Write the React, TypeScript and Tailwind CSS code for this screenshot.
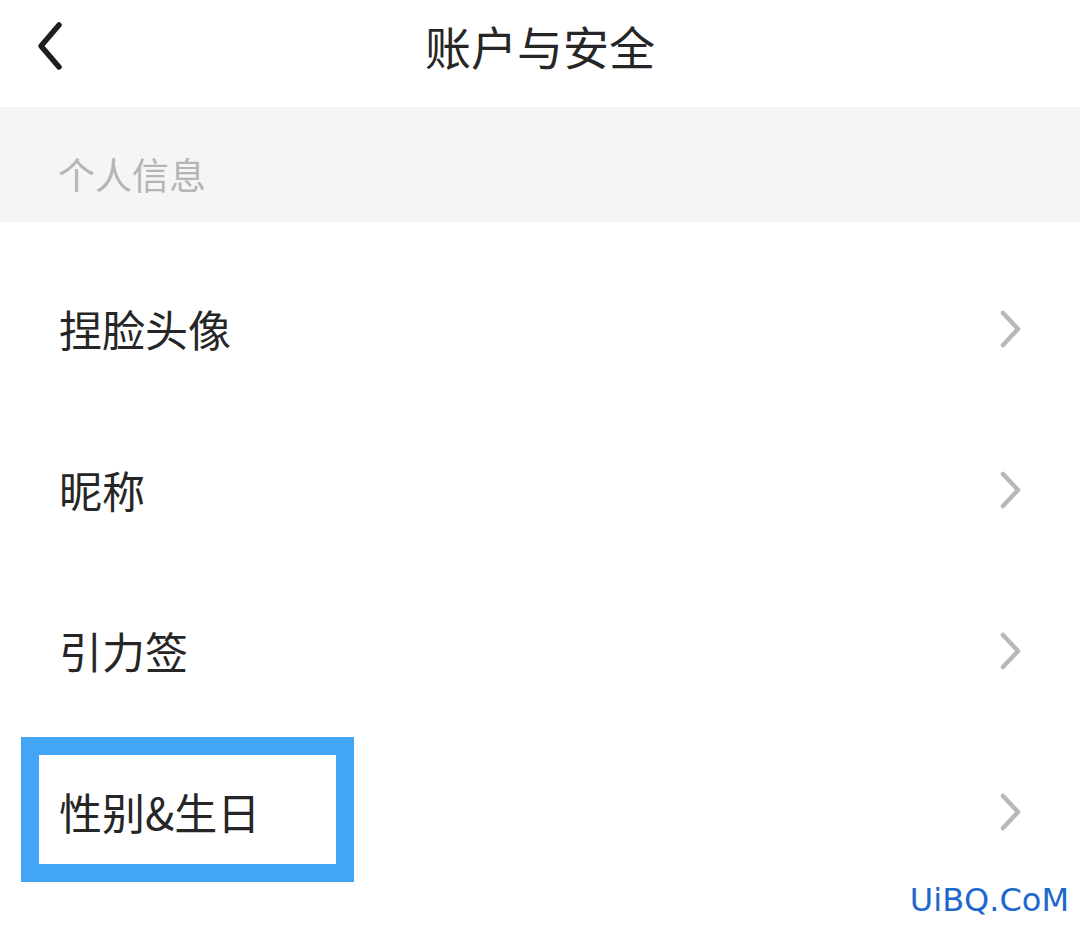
import React from 'react';

const rows = ['捏脸头像', '昵称', '引力签', '性别&生日'];

function BackIcon() {
  return (
    <svg width="34" height="52" viewBox="0 0 34 52" fill="none">
      <path d="M25 4 L7 25 L25 46" stroke="#1f1f1f" strokeWidth="5.5" strokeLinecap="round" strokeLinejoin="round" />
    </svg>
  );
}

function ChevronRight() {
  return (
    <svg width="30" height="42" viewBox="0 0 30 42" fill="none">
      <path d="M7 5 L22 21 L7 37" stroke="#b8b8b8" strokeWidth="4.5" strokeLinecap="round" strokeLinejoin="round" />
    </svg>
  );
}

export default function App() {
  return (
    <div
      className="relative w-[1080px] h-[927px] overflow-hidden bg-white"
      style={{ fontFamily: '"Noto Sans CJK SC", "Noto Sans", sans-serif' }}
    >
      {/* Header */}
      <div className="relative flex h-[107px] items-center justify-center pb-[17px]">
        <div className="absolute left-[34px] top-[21px]">
          <BackIcon />
        </div>
        <span className="text-[46px] leading-none text-[#262626]">账户与安全</span>
      </div>

      {/* Section title */}
      <div className="flex h-[115px] items-center bg-[#f5f5f5] pl-[58px] pt-[20px]">
        <span className="text-[37px] leading-none text-[#b5b5b5]">个人信息</span>
      </div>

      {/* Rows */}
      <div className="pt-[26px]">
        {rows.map((label) => (
          <div key={label} className="flex h-[161px] items-center justify-between pl-[59px] pr-[54px]">
            <span className="text-[43px] leading-none text-[#262626]">{label}</span>
            <ChevronRight />
          </div>
        ))}
      </div>

      {/* Highlight annotation */}
      <div className="absolute left-[21px] top-[737px] h-[145px] w-[333px] border-[18px] border-[#42a5f5]" />

      {/* Watermark */}
      <div
        className="absolute right-[11px] top-[884px] text-[32px] leading-none text-[#1d68cc]"
        style={{ fontFamily: '"DejaVu Sans", sans-serif' }}
      >
        UiBQ.CoM
      </div>
    </div>
  );
}
